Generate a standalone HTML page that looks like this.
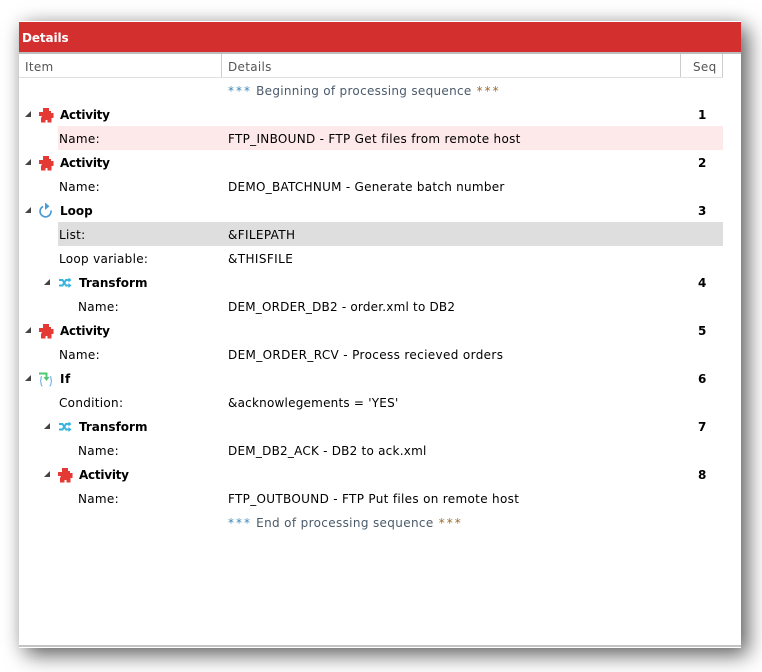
<!DOCTYPE html>
<html><head><meta charset="utf-8">
<style>
html,body{margin:0;padding:0;background:#fff;}
body{width:762px;height:672px;overflow:hidden;position:relative;font-family:"DejaVu Sans",sans-serif;font-size:12px;color:#000;}
#p{position:absolute;left:19px;top:21px;width:722px;height:627px;background:#fff;box-shadow:7px 7px 20px rgba(0,0,0,.6),0 0 16px rgba(0,0,0,.1);}
#h{position:absolute;left:0;top:1px;width:722px;height:30px;background:#d32f2f;border-bottom:2px solid #bdbdbd;color:#fff;font-weight:bold;line-height:32px;text-indent:3px;font-size:12px;letter-spacing:-.1px;}
.c{position:absolute;top:33px;height:23px;line-height:26px;color:#555;letter-spacing:.3px;}
.l{position:absolute;left:0;top:56px;width:704px;height:1px;background:#e0e0e0;}
.s{position:absolute;top:33px;width:1px;height:24px;background:#ccc;}
.b{position:absolute;left:0;top:624px;width:722px;height:2px;background:#c4c4c4;}
.t{position:absolute;white-space:nowrap;line-height:26px;height:24px;letter-spacing:.3px;}
.g{font-weight:bold;letter-spacing:0;}
.n{letter-spacing:-.25px;}
.st{letter-spacing:2px;}
.r{position:absolute;height:24px;}
svg{position:absolute;}
.a{position:absolute;width:0;height:0;border-style:solid;border-width:0 0 6px 6px;border-color:transparent transparent #444 transparent;}
</style></head><body>
<div id="p">
<div id="h">Details</div>
<div class="c" style="left:6px">Item</div>
<div class="c" style="left:209px">Details</div>
<div class="c" style="left:674px">Seq</div>
<div class="s" style="left:202px"></div><div class="s" style="left:661px"></div><div class="s" style="left:703px"></div>
<div class="l"></div><div class="b"></div>

<div class="r" style="left:39px;top:105px;width:665px;background:#fde8ea"></div>
<div class="r" style="left:39px;top:201px;width:665px;background:#dedede"></div>

<div class="t" style="left:209px;top:57px;color:#4a5a6a"><span class="st" style="color:#3f88b5">***</span> Beginning of processing sequence <span class="st" style="color:#9a6a2a;margin-left:1px">***</span></div>
<div class="t" style="left:209px;top:489px;color:#4a5a6a;letter-spacing:.35px"><span class="st" style="color:#3f88b5">***</span> End of processing sequence <span class="st" style="color:#9a6a2a;margin-left:1px">***</span></div>

<div class="t g n" style="left:41px;top:81px">Activity</div><div class="t g" style="left:679px;top:81px">1</div>
<div class="t" style="left:40px;top:105px">Name:</div><div class="t" style="left:209px;top:105px">FTP_INBOUND - FTP Get files from remote host</div>
<div class="t g n" style="left:41px;top:129px">Activity</div><div class="t g" style="left:679px;top:129px">2</div>
<div class="t" style="left:40px;top:153px">Name:</div><div class="t" style="left:209px;top:153px;letter-spacing:.27px">DEMO_BATCHNUM - Generate batch number</div>
<div class="t g" style="left:41px;top:177px">Loop</div><div class="t g" style="left:679px;top:177px">3</div>
<div class="t" style="left:40px;top:201px">List:</div><div class="t" style="left:209px;top:201px;letter-spacing:.35px">&amp;FILEPATH</div>
<div class="t" style="left:40px;top:225px">Loop variable:</div><div class="t" style="left:209px;top:225px;letter-spacing:.4px">&amp;THISFILE</div>
<div class="t g" style="left:60px;top:249px">Transform</div><div class="t g" style="left:679px;top:249px">4</div>
<div class="t" style="left:59px;top:273px">Name:</div><div class="t" style="left:209px;top:273px;letter-spacing:.2px">DEM_ORDER_DB2 - order.xml to DB2</div>
<div class="t g n" style="left:41px;top:297px">Activity</div><div class="t g" style="left:679px;top:297px">5</div>
<div class="t" style="left:40px;top:321px">Name:</div><div class="t" style="left:209px;top:321px;letter-spacing:.36px">DEM_ORDER_RCV - Process recieved orders</div>
<div class="t g" style="left:41px;top:345px;letter-spacing:.5px">If</div><div class="t g" style="left:679px;top:345px">6</div>
<div class="t" style="left:40px;top:369px">Condition:</div><div class="t" style="left:209px;top:369px;letter-spacing:.22px">&amp;acknowlegements = 'YES'</div>
<div class="t g" style="left:60px;top:393px">Transform</div><div class="t g" style="left:679px;top:393px">7</div>
<div class="t" style="left:59px;top:417px">Name:</div><div class="t" style="left:209px;top:417px;letter-spacing:.23px">DEM_DB2_ACK - DB2 to ack.xml</div>
<div class="t g n" style="left:60px;top:441px">Activity</div><div class="t g" style="left:679px;top:441px">8</div>
<div class="t" style="left:59px;top:465px">Name:</div><div class="t" style="left:209px;top:465px;letter-spacing:.32px">FTP_OUTBOUND - FTP Put files on remote host</div>

<div class="a" style="left:6px;top:90px"></div>
<div class="a" style="left:6px;top:138px"></div>
<div class="a" style="left:6px;top:186px"></div>
<div class="a" style="left:25px;top:258px"></div>
<div class="a" style="left:6px;top:306px"></div>
<div class="a" style="left:6px;top:354px"></div>
<div class="a" style="left:25px;top:402px"></div>
<div class="a" style="left:25px;top:450px"></div>

<svg style="left:19px;top:86px" width="16" height="16" viewBox="0 0 16 16"><path d="M5 1h6v3h2v2h2.500v5h-2v4.500h-4V13h-2v2.500H3V11l1-2H1V5h4z" fill="#e53935"/></svg>
<svg style="left:19px;top:134px" width="16" height="16" viewBox="0 0 16 16"><path d="M5 1h6v3h2v2h2.500v5h-2v4.500h-4V13h-2v2.500H3V11l1-2H1V5h4z" fill="#e53935"/></svg>
<svg style="left:19px;top:302px" width="16" height="16" viewBox="0 0 16 16"><path d="M5 1h6v3h2v2h2.500v5h-2v4.500h-4V13h-2v2.500H3V11l1-2H1V5h4z" fill="#e53935"/></svg>
<svg style="left:38px;top:446px" width="16" height="16" viewBox="0 0 16 16"><path d="M5 1h6v3h2v2h2.500v5h-2v4.500h-4V13h-2v2.500H3V11l1-2H1V5h4z" fill="#e53935"/></svg>

<svg style="left:19px;top:181px" width="16" height="16" viewBox="0 0 16 16"><path d="M5 4.500A5.500 5.500 0 1 0 13 8.500" fill="none" stroke="#4a9ad4" stroke-width="1.700"/><path d="M7 .5v7.500l4.500-3.800z" fill="#4a9ad4"/></svg>

<svg style="left:38px;top:254px" width="16" height="16" viewBox="0 0 16 16"><path d="M2 5h3.500l3.500 5.500h3M2 10.500h3.500L9 5h3" fill="none" stroke="#35b5e0" stroke-width="2"/><path d="M11.500 2.500v5l3-2.500zM11.500 8v5l3-2.500z" fill="#35b5e0"/></svg>
<svg style="left:38px;top:398px" width="16" height="16" viewBox="0 0 16 16"><path d="M2 5h3.500l3.500 5.500h3M2 10.500h3.500L9 5h3" fill="none" stroke="#35b5e0" stroke-width="2"/><path d="M11.500 2.500v5l3-2.500zM11.500 8v5l3-2.500z" fill="#35b5e0"/></svg>

<svg style="left:19px;top:350px" width="16" height="16" viewBox="0 0 16 16"><path d="M4 5.500C2 5.500 4 9.500 2 10 4 10.500 2 15 4.500 15M12 5.500c2 0 0 4 2 4.500-2 .5 0 5-2.500 5" fill="none" stroke="#6ab0e0" stroke-width="1.100"/><path d="M1 2.500h7.500v4" fill="none" stroke="#4cc870" stroke-width="1.900"/><path d="M5.500 6h6l-3 4z" fill="#4cc870"/></svg>
</div>
</body></html>
